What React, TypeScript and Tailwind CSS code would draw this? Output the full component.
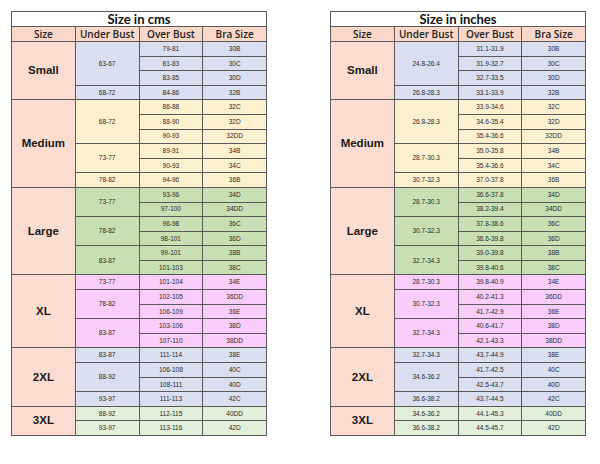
type Band = {
  size: string;
  bg: string;
  rows: number;
  groups: { ub: string; items: [string, string][] }[];
};

const spans: Record<number, string> = {
  1: "row-span-1",
  2: "row-span-2",
  3: "row-span-3",
  4: "row-span-4",
  5: "row-span-5",
  6: "row-span-6",
};

const BLUE = "bg-[#d9dff0]";
const YELLOW = "bg-[#fdf0cf]";
const GREEN = "bg-[#c6e0b4]";
const PINK = "bg-[#f8cdf9]";
const LGREEN = "bg-[#e2efd9]";

const cms: Band[] = [
  {
    size: "Small",
    bg: BLUE,
    rows: 4,
    groups: [
      { ub: "63-67", items: [["79-81", "30B"], ["81-83", "30C"], ["83-85", "30D"]] },
      { ub: "68-72", items: [["84-86", "32B"]] },
    ],
  },
  {
    size: "Medium",
    bg: YELLOW,
    rows: 6,
    groups: [
      { ub: "68-72", items: [["86-88", "32C"], ["88-90", "32D"], ["90-93", "32DD"]] },
      { ub: "73-77", items: [["89-91", "34B"], ["90-93", "34C"]] },
      { ub: "78-82", items: [["94-96", "36B"]] },
    ],
  },
  {
    size: "Large",
    bg: GREEN,
    rows: 6,
    groups: [
      { ub: "73-77", items: [["93-96", "34D"], ["97-100", "34DD"]] },
      { ub: "78-82", items: [["96-98", "36C"], ["98-101", "36D"]] },
      { ub: "83-87", items: [["99-101", "38B"], ["101-103", "38C"]] },
    ],
  },
  {
    size: "XL",
    bg: PINK,
    rows: 5,
    groups: [
      { ub: "73-77", items: [["101-104", "34E"]] },
      { ub: "78-82", items: [["102-105", "36DD"], ["106-109", "36E"]] },
      { ub: "83-87", items: [["103-106", "38D"], ["107-110", "38DD"]] },
    ],
  },
  {
    size: "2XL",
    bg: BLUE,
    rows: 4,
    groups: [
      { ub: "83-87", items: [["111-114", "38E"]] },
      { ub: "88-92", items: [["106-108", "40C"], ["108-111", "40D"]] },
      { ub: "93-97", items: [["111-113", "42C"]] },
    ],
  },
  {
    size: "3XL",
    bg: LGREEN,
    rows: 2,
    groups: [
      { ub: "88-92", items: [["112-115", "40DD"]] },
      { ub: "93-97", items: [["113-116", "42D"]] },
    ],
  },
];

const inches: Band[] = [
  {
    size: "Small",
    bg: BLUE,
    rows: 4,
    groups: [
      { ub: "24.8-26.4", items: [["31.1-31.9", "30B"], ["31.9-32.7", "30C"], ["32.7-33.5", "30D"]] },
      { ub: "26.8-28.3", items: [["33.1-33.9", "32B"]] },
    ],
  },
  {
    size: "Medium",
    bg: YELLOW,
    rows: 6,
    groups: [
      { ub: "26.8-28.3", items: [["33.9-34.6", "32C"], ["34.6-35.4", "32D"], ["35.4-36.6", "32DD"]] },
      { ub: "28.7-30.3", items: [["35.0-35.8", "34B"], ["35.4-36.6", "34C"]] },
      { ub: "30.7-32.3", items: [["37.0-37.8", "36B"]] },
    ],
  },
  {
    size: "Large",
    bg: GREEN,
    rows: 6,
    groups: [
      { ub: "28.7-30.3", items: [["36.6-37.8", "34D"], ["38.2-39.4", "34DD"]] },
      { ub: "30.7-32.3", items: [["37.8-38.6", "36C"], ["38.6-39.8", "36D"]] },
      { ub: "32.7-34.3", items: [["39.0-39.8", "38B"], ["39.8-40.6", "38C"]] },
    ],
  },
  {
    size: "XL",
    bg: PINK,
    rows: 5,
    groups: [
      { ub: "28.7-30.3", items: [["39.8-40.9", "34E"]] },
      { ub: "30.7-32.3", items: [["40.2-41.3", "36DD"], ["41.7-42.9", "36E"]] },
      { ub: "32.7-34.3", items: [["40.6-41.7", "38D"], ["42.1-43.3", "38DD"]] },
    ],
  },
  {
    size: "2XL",
    bg: BLUE,
    rows: 4,
    groups: [
      { ub: "32.7-34.3", items: [["43.7-44.9", "38E"]] },
      { ub: "34.6-36.2", items: [["41.7-42.5", "40C"], ["42.5-43.7", "40D"]] },
      { ub: "36.6-38.2", items: [["43.7-44.5", "42C"]] },
    ],
  },
  {
    size: "3XL",
    bg: LGREEN,
    rows: 2,
    groups: [
      { ub: "34.6-36.2", items: [["44.1-45.3", "40DD"]] },
      { ub: "36.6-38.2", items: [["44.5-45.7", "42D"]] },
    ],
  },
];

const cell = "flex items-center justify-center";
const small = "text-[6.5px] text-[#2a2a2a] font-['Liberation_Sans',Arial,sans-serif]";

function SizeTable({ title, bands }: { title: string; bands: Band[] }) {
  return (
    <div className="grid w-[256px] h-[425px] grid-cols-4 grid-rows-[14px_14px_repeat(27,minmax(0,1fr))] gap-px bg-[#5a5a5a] p-px">
      <div className={`${cell} col-span-4 bg-white text-[13px] font-bold text-[#111] font-['Lato',sans-serif] leading-none`}>
        {title}
      </div>
      {["Size", "Under Bust", "Over Bust", "Bra Size"].map((h) => (
        <div
          key={h}
          className={`${cell} bg-[#f9d8c9] text-[10px] font-semibold text-[#222] font-['Open_Sans',sans-serif] leading-none`}
        >
          {h}
        </div>
      ))}
      {bands.map((b) => [
        <div
          key={b.size}
          className={`${cell} ${spans[b.rows]} bg-[#fadcd0] text-[11.5px] font-bold text-[#1a1a1a] font-['Liberation_Sans',Arial,sans-serif]`}
        >
          {b.size}
        </div>,
        ...b.groups.map((g, gi) => [
          <div key={`${b.size}-ub-${gi}`} className={`${cell} ${spans[g.items.length]} ${b.bg} ${small}`}>
            {g.ub}
          </div>,
          ...g.items.map(([ob, bra], ii) => [
            <div key={`${b.size}-${gi}-${ii}-ob`} className={`${cell} ${b.bg} ${small}`}>
              {ob}
            </div>,
            <div key={`${b.size}-${gi}-${ii}-bra`} className={`${cell} ${b.bg} ${small}`}>
              {bra}
            </div>,
          ]),
        ]),
      ])}
    </div>
  );
}

export default function App() {
  return (
    <div className="w-[600px] h-[464px] bg-white flex gap-[63px] pl-[11px] pt-[11px]">
      <SizeTable title="Size in cms" bands={cms} />
      <SizeTable title="Size in inches" bands={inches} />
    </div>
  );
}
